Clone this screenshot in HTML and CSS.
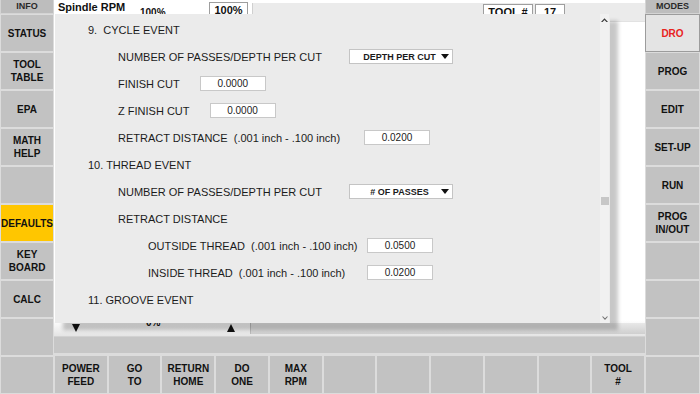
FILE: index.html
```html
<!DOCTYPE html>
<html>

<head>
  <meta charset="utf-8">
  <title>DRO - Defaults</title>
  <link rel="stylesheet" href="styles.css">
</head>

<body>
  <div class="screen">
    <aside class="side">
      <div class="side-head">INFO</div>
      <div class="key">STATUS</div>
      <div class="key">TOOL<br>TABLE</div>
      <div class="key">EPA</div>
      <div class="key">MATH<br>HELP</div>
      <div class="key"></div>
      <div class="key active">DEFAULTS</div>
      <div class="key">KEY<br>BOARD</div>
      <div class="key">CALC</div>
      <div class="key"></div>
      <div class="key"></div>
    </aside>

    <main class="center">
      <div class="dro">
        <div class="dro-top">
          <span class="spindle">Spindle RPM</span>
          <span class="pct">100%</span>
          <span class="box pct-box">100%</span>
          <div class="strip">
            <span class="box tool-box">TOOL #</span>
            <span class="box num-box">17</span>
          </div>
        </div>
        <div class="dro-body"></div>
        <div class="dro-foot">
          <i class="tri down"></i>
          <span class="foot-pct">0%</span>
          <span class="foot-box"></span>
          <i class="tri up"></i>
          <span class="foot-bar"></span>
        </div>

        <!-- defaults dialog -->
        <div class="dialog">
          <div class="form">
            <div class="row head">9.  CYCLE EVENT</div>
            <div class="row sub">
              <span class="lbl-passes">NUMBER OF PASSES/DEPTH PER CUT</span>
              <span class="pick"><span>DEPTH PER CUT</span><i class="caret"></i></span>
            </div>
            <div class="row sub">
              <span>FINISH CUT</span>
              <span class="num">0.0000</span>
            </div>
            <div class="row sub">
              <span>Z FINISH CUT</span>
              <span class="num">0.0000</span>
            </div>
            <div class="row sub">
              <span class="lbl-retract">RETRACT DISTANCE  (.001 inch - .100 inch)</span>
              <span class="num">0.0200</span>
            </div>
            <div class="row head">10. THREAD EVENT</div>
            <div class="row sub">
              <span class="lbl-passes">NUMBER OF PASSES/DEPTH PER CUT</span>
              <span class="pick"><span># OF PASSES</span><i class="caret"></i></span>
            </div>
            <div class="row sub">RETRACT DISTANCE</div>
            <div class="row sub2">
              <span class="lbl-thread">OUTSIDE THREAD  (.001 inch - .100 inch)</span>
              <span class="num">0.0500</span>
            </div>
            <div class="row sub2">
              <span class="lbl-thread">INSIDE THREAD  (.001 inch - .100 inch)</span>
              <span class="num">0.0200</span>
            </div>
            <div class="row head">11. GROOVE EVENT</div>
          </div>
          <div class="scroll">
            <svg class="arrow" width="7" height="4" viewBox="0 0 7 4">
              <path d="M0 4 L3.5 0.3 L7 4 L5.4 4 L3.5 2 L1.6 4 Z" fill="#3a3a3a" />
            </svg>
            <div class="track"><span class="thumb"></span></div>
            <svg class="arrow" width="6" height="4" viewBox="0 0 6 4">
              <path d="M0.5 0.5 L3 3.2 L5.5 0.5" fill="none" stroke="#777" stroke-width="1.1" />
            </svg>
          </div>
        </div>
      </div>

      <div class="band"></div>

      <div class="softkeys">
        <div class="key">POWER<br>FEED</div>
        <div class="key">GO<br>TO</div>
        <div class="key">RETURN<br>HOME</div>
        <div class="key">DO<br>ONE</div>
        <div class="key">MAX<br>RPM</div>
        <div class="key"></div>
        <div class="key"></div>
        <div class="key"></div>
        <div class="key"></div>
        <div class="key"></div>
        <div class="key">TOOL<br>#</div>
      </div>
    </main>

    <aside class="side">
      <div class="side-head">MODES</div>
      <div class="key current">DRO</div>
      <div class="key">PROG</div>
      <div class="key">EDIT</div>
      <div class="key">SET-UP</div>
      <div class="key">RUN</div>
      <div class="key">PROG<br>IN/OUT</div>
      <div class="key"></div>
      <div class="key"></div>
      <div class="key"></div>
      <div class="key"></div>
    </aside>
  </div>
</body>

</html>
```

FILE: styles.css
```css
* {
  box-sizing: border-box;
}

html,
body {
  margin: 0;
  padding: 0;
}

body {
  width: 700px;
  height: 394px;
  overflow: hidden;
  font-family: "Liberation Sans", Arial, sans-serif;
  color: #111;
  background: #fff;
}

.screen {
  display: grid;
  grid-template-columns: 54px 591px 55px;
  height: 394px;
}

/* side columns */

.side {
  display: grid;
  grid-template-rows: 14px repeat(10, 38px);
  background: #dadada;
}

.side-head {
  background: #bdbdbd;
  border: 1px solid #d4d4d4;
  border-top: 0;
  color: #2a2a2a;
  font-size: 9px;
  font-weight: bold;
  line-height: 12px;
  text-align: center;
}

.key {
  display: flex;
  align-items: center;
  justify-content: center;
  text-align: center;
  background: #c2c2c2;
  border: 1px solid #dcdcdc;
  font-size: 10px;
  font-weight: bold;
  line-height: 13px;
  color: #111;
}

.key.active {
  background: #ffc600;
}

.key.current {
  background: #e4e4e4;
  border-color: #9c9c9c;
  color: #e8231e;
}

/* centre */

.center {
  display: flex;
  flex-direction: column;
}

.dro {
  position: relative;
  display: flex;
  flex-direction: column;
  height: 336px;
  background: #fff;
}

.dro-top {
  display: flex;
  align-items: flex-start;
  height: 22px;
}

.spindle {
  width: 86px;
  padding: 1px 0 0 4px;
  font-size: 11px;
  font-weight: bold;
}

.pct {
  width: 69px;
  padding-top: 7px;
  font-size: 10px;
  font-weight: bold;
}

.box {
  height: 19px;
  margin-top: 2px;
  background: #fff;
  border: 1px solid #9e9e9e;
  font-size: 11px;
  font-weight: bold;
  text-align: center;
  line-height: 14px;
}

.pct-box {
  width: 39px;
}

.strip {
  display: flex;
  flex: 1;
  height: 19px;
  margin: 3px 0 0 4px;
  background: #ebebeb;
  border-left: 1px solid #d0d0d0;
  border-bottom: 1px solid #e2e2e2;
}

.strip .box {
  margin-top: 1px;
}

.tool-box {
  width: 50px;
  margin-left: 230px;
}

.num-box {
  width: 30px;
  margin-left: 2px;
}

.dro-body {
  flex: 1;
}

.dro-foot {
  display: flex;
  align-items: flex-start;
  height: 16px;
  background: linear-gradient(#fff, #e4e4e4);
  font-size: 10px;
  font-weight: bold;
}

.tri {
  width: 0;
  height: 0;
  margin: 4px 0 0 18px;
  border-left: 4px solid transparent;
  border-right: 4px solid transparent;
  border-top: 8px solid #111;
}

.tri.up {
  margin: 4px 0 0 -41px;
  border-top: 0;
  border-bottom: 8px solid #111;
}

.foot-pct {
  margin: -3px 0 0 66px;
}

.foot-box {
  width: 68px;
  height: 16px;
  margin-left: 40px;
  border-top: 1px solid #d8d8d8;
}

.foot-bar {
  flex: 1;
  height: 11px;
  margin: 3px 0 0 15px;
  border-left: 1px solid #bbb;
  background: linear-gradient(#e8e8e8, #cfcfcf);
}

/* dialog */

.dialog {
  position: absolute;
  left: 1px;
  top: 14px;
  width: 555px;
  height: 309px;
  display: flex;
  background: #ebebeb;
  box-shadow: 8px 7px 4px rgba(0, 0, 0, 0.22);
}

.form {
  flex: 1;
  padding: 2px 0 0 33px;
}

.row {
  display: flex;
  align-items: center;
  gap: 20px;
  height: 27px;
  font-size: 11px;
  color: #1b1b1b;
  white-space: pre;
}

.row.sub {
  padding-left: 30px;
}

.row.sub2 {
  padding-left: 60px;
}

.lbl-passes {
  width: 211px;
}

.lbl-retract {
  width: 226px;
}

.lbl-thread {
  width: 199px;
}

.num {
  width: 66px;
  height: 15px;
  background: #fff;
  border: 1px solid #c8c8c8;
  font-size: 10px;
  line-height: 13px;
  text-align: center;
}

.pick {
  display: flex;
  align-items: center;
  width: 104px;
  height: 15px;
  padding: 0 3px 0 8px;
  background: #fff;
  border: 1px solid #c4c4c4;
  font-size: 9px;
  font-weight: bold;
}

.pick span {
  flex: 1;
  text-align: center;
}

.caret {
  width: 0;
  height: 0;
  border-left: 4px solid transparent;
  border-right: 4px solid transparent;
  border-top: 5px solid #111;
}

.scroll {
  display: flex;
  flex-direction: column;
  align-items: center;
  width: 9px;
  margin-right: 1px;
  padding: 4px 0 3px;
  background: #f1f1f1;
}

.track {
  flex: 1;
  width: 100%;
  padding-top: 175px;
}

.thumb {
  display: block;
  width: 8px;
  height: 8px;
  margin: 0 auto;
  background: #c7c7c7;
}

/* bottom */

.band {
  height: 19px;
  background: #c6c6c6;
  border-top: 1px solid #d2d2d2;
  border-bottom: 2px solid #dcdcdc;
}

.softkeys {
  display: grid;
  grid-template-columns: repeat(11, 1fr);
  height: 39px;
  background: #dadada;
}
```
